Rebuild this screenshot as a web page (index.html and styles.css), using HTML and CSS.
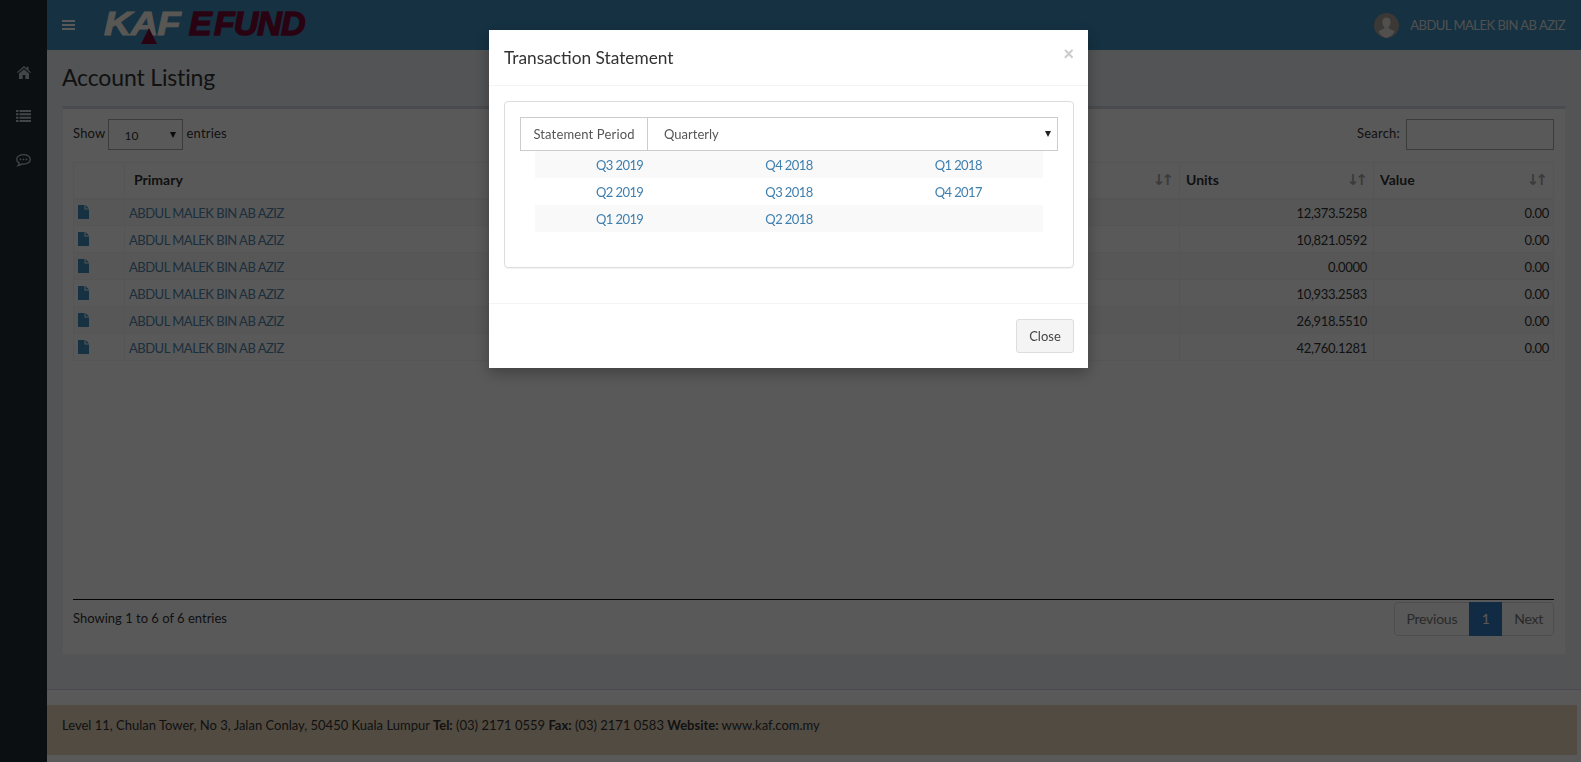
FILE: index.html
```html
<!DOCTYPE html>
<html lang="en">
<head>
    <meta charset="utf-8">
    <title>Account Listing</title>
    <link rel="stylesheet" href="styles.css">
</head>
<body>
<div class="app">
    <aside class="sidebar">
        <a class="side-link">
            <svg width="14" height="13" viewBox="0 0 14 13"><path d="M7 0 0 6.200l.8.900L7 1.800l6.200 5.300.8-.900L11.500 4V.8H9.700v1.700zM2 7.600V13h3.700V9h2.600v4H12V7.600L7 3.300z"/></svg>
        </a>
        <a class="side-link">
            <svg width="15" height="12" viewBox="0 0 15 12"><path d="M0 0h2.500v2H0zM3.500 0H15v2H3.500zM0 3.300h2.500v2H0zM3.500 3.300H15v2H3.500zM0 6.700h2.500v2H0zM3.500 6.700H15v2H3.500zM0 10h2.500v2H0zM3.500 10H15v2H3.500z"/></svg>
        </a>
        <a class="side-link">
            <svg width="15" height="13" viewBox="0 0 15 13"><path class="outline" d="M7.500.7C3.700.7.700 2.800.700 5.400c0 1.500 1 2.800 2.600 3.700-.2.900-.7 1.800-1.300 2.500 1.300-.2 2.700-.9 3.600-1.700.6.100 1.300.2 1.900.2 3.800 0 6.800-2.100 6.800-4.700S11.300.7 7.500.7z"/><circle cx="4.500" cy="5.400" r=".9"/><circle cx="7.500" cy="5.400" r=".9"/><circle cx="10.500" cy="5.400" r=".9"/></svg>
        </a>
    </aside>
    <div class="wrapper">
        <header class="topbar">
            <a class="toggle"><span></span><span></span><span></span></a>
            <div class="logo">
                <span class="logo-kaf">KAF</span>
                <span class="logo-fund">E FUND</span>
                <svg class="logo-mark" width="16" height="16" viewBox="0 0 16 16"><path d="M8 0 16 16H0z"/></svg>
            </div>
            <div class="user">
                <svg class="avatar" width="25" height="25" viewBox="0 0 25 25"><circle cx="12.500" cy="12.500" r="12.500" fill="#a8a29c"/><path fill="#e8e4e0" d="M12.500 4.500c-2.800 0-4.300 2.200-4.100 5 .1 1.700.8 3.300 1.900 4.300v1.700c-1.800 1-4.600 1.500-5.800 3.300A12.500 12.500 0 0 0 12.500 25a12.500 12.500 0 0 0 8-6.200c-1.200-1.800-4-2.300-5.800-3.300v-1.700c1.100-1 1.800-2.600 1.900-4.300.2-2.800-1.300-5-4.100-5z"/></svg>
                <span>ABDUL MALEK BIN AB AZIZ</span>
            </div>
        </header>
        <main class="content">
            <h1 class="page-title">Account Listing</h1>
            <section class="box">
                <div class="dt-top">
                    <label class="dt-length">Show
                        <span class="select-wrap select-small"><select><option>10</option></select></span>
                        entries</label>
                    <label class="dt-search">Search: <input type="text"></label>
                </div>
                <div class="dt-scroll">
                    <table class="dt-table">
                        <colgroup>
                            <col class="col-icon"><col class="col-primary"><col class="col-hidden"><col class="col-units"><col class="col-value">
                        </colgroup>
                        <thead>
                            <tr>
                                <th></th>
                                <th class="first">Primary</th>
                                <th class="sort"></th>
                                <th class="sort">Units</th>
                                <th class="sort">Value</th>
                            </tr>
                        </thead>
                        <tbody id="rows"></tbody>
                    </table>
                </div>
                <div class="dt-bottom">
                    <div class="dt-info">Showing 1 to 6 of 6 entries</div>
                    <div class="pager">
                        <a>Previous</a><a class="current">1</a><a class="next">Next</a>
                    </div>
                </div>
            </section>
        </main>
        <footer class="footer">
            <div class="footer-note">Level 11, Chulan Tower, No 3, Jalan Conlay, 50450 Kuala Lumpur <b>Tel:</b> (03) 2171 0559 <b>Fax:</b> (03) 2171 0583 <b>Website:</b> www.kaf.com.my</div>
        </footer>
    </div>
</div>

<div class="backdrop"></div>
<div class="modal">
    <div class="modal-box">
        <div class="modal-head">
            <h4>Transaction Statement</h4>
            <a class="modal-x">&times;</a>
        </div>
        <div class="modal-body">
            <div class="panel">
                <div class="input-group">
                    <span class="addon">Statement Period</span>
                    <span class="select-wrap select-period"><select><option>Quarterly</option></select></span>
                </div>
                <table class="period-table">
                    <tr><td><a>Q3 2019</a></td><td><a>Q4 2018</a></td><td><a>Q1 2018</a></td></tr>
                    <tr><td><a>Q2 2019</a></td><td><a>Q3 2018</a></td><td><a>Q4 2017</a></td></tr>
                    <tr><td><a>Q1 2019</a></td><td><a>Q2 2018</a></td><td></td></tr>
                </table>
            </div>
        </div>
        <div class="modal-foot">
            <a class="btn">Close</a>
        </div>
    </div>
</div>
<script>
    var units = ['12,373.5258', '10,821.0592', '0.0000', '10,933.2583', '26,918.5510', '42,760.1281'];
    var html = '';
    for (var i = 0; i < units.length; i++) {
        html += '<tr>' +
            '<td class="file"><svg width="11" height="14" viewBox="0 0 11 14"><path d="M0 0h6.500v4.500H11V14H0zM7.500 0 11 3.500H7.500z"/></svg></td>' +
            '<td><a>ABDUL MALEK BIN AB AZIZ</a></td><td></td>' +
            '<td class="num units">' + units[i] + '</td><td class="num">0.00</td></tr>';
    }
    document.getElementById('rows').innerHTML = html;
</script>
</body>
</html>
```

FILE: styles.css
```css
* {
    margin: 0;
    padding: 0;
    box-sizing: border-box;
}
html,body {
    height: 100%;
    overflow: hidden;
}
body {
    font-family: "Lato", "Open Sans", sans-serif;
    font-size: 13px;
    color: #333;
    background-color: #ecf0f5;
}
a {
    color: #4f86ad;
    text-decoration: none;
}
.app {
    display: flex;
    height: 100%;
}

/* sidebar */
.sidebar {
    width: 47px;
    flex: none;
    background-color: #222d32;
    padding-top: 50px;
}
.side-link {
    display: flex;
    height: 44px;
    align-items: center;
    justify-content: center;
}
.side-link svg {
    fill: #b8c7ce;
}
.side-link .outline {
    fill: none;
    stroke: #b8c7ce;
    stroke-width: 1.300;
}

/* header */
.wrapper {
    flex: 1;
    display: flex;
    flex-direction: column;
    min-width: 0;
}
.topbar {
    height: 50px;
    flex: none;
    display: flex;
    align-items: center;
    background-color: #3c8dbc;
    padding: 0 15px;
}
.toggle {
    display: flex;
    flex-direction: column;
    gap: 2px;
    width: 13px;
    margin-right: 29px;
}
.toggle span {
    height: 2px;
    background-color: #fff;
}
.logo {
    position: relative;
    display: flex;
    align-items: center;
    gap: 18px;
    height: 50px;
    padding-bottom: 3px;
    font-family: "Liberation Sans", sans-serif;
    font-size: 34px;
    font-weight: bold;
    font-style: italic;
    letter-spacing: -1px;
    white-space: nowrap;
}
.logo-kaf {
    display: block;
    color: #fff8ee;
    -webkit-text-stroke: 1px #fff8ee;
    transform: scaleX(1.130);
    transform-origin: left center;
}
.logo-fund {
    color: #7a0a34;
    word-spacing: -5px;
    -webkit-text-stroke: 1.500px #7a0a34;
}
.logo-mark {
    position: absolute;
    left: 37px;
    top: 28px;
    fill: #7a0a34;
}
.user {
    margin-left: auto;
    display: flex;
    align-items: center;
    gap: 11px;
    color: #e4e4e4;
    letter-spacing: -.5px;
    padding-right: 1px;
}

/* content */
.content {
    flex: 1;
    min-height: 0;
    display: flex;
    flex-direction: column;
    padding: 15px 15px 34px;
}
.page-title {
    font-size: 23px;
    font-weight: 400;
    line-height: 25px;
    letter-spacing: -.15px;
    margin-bottom: 16px;
}
.box {
    flex: 1;
    min-height: 0;
    display: flex;
    flex-direction: column;
    background-color: #fff;
    border: 1px solid #f4f4f4;
    border-top: 3px solid #d2d6de;
    padding: 10px 11px 18px 10px;
}
.dt-top {
    display: flex;
    justify-content: space-between;
    align-items: center;
    height: 31px;
    margin-bottom: 12px;
}
.dt-length,
.dt-search {
    display: flex;
    align-items: center;
    gap: 3px;
    padding-bottom: 4px;
    letter-spacing: .2px;
}
.dt-search {
    gap: 6px;
}
.dt-search input {
    width: 148px;
    height: 31px;
    margin-bottom: -4px;
    border: 1px solid #aaa;
    background-color: transparent;
}
.select-wrap {
    position: relative;
    display: block;
}
.select-wrap select {
    appearance: none;
    -webkit-appearance: none;
    width: 100%;
    height: 100%;
    background-color: transparent;
    border: 1px solid #aaa;
    color: #333;
    font-family: inherit;
    font-size: inherit;
}
.select-wrap::after {
    content: "";
    position: absolute;
    right: 7px;
    top: 50%;
    margin-top: -3px;
    border-left: 3px solid transparent;
    border-right: 3px solid transparent;
    border-top: 6px solid #222;
}
.select-small {
    width: 75px;
    height: 31px;
    margin-bottom: -4px;
    font-size: 12px;
}
.select-small select {
    padding: 2px 0 0 15px;
}
.dt-scroll {
    flex: 1;
    min-height: 0;
    border-bottom: 1px solid #111;
}
.dt-table {
    width: 100%;
    table-layout: fixed;
    border-collapse: collapse;
}
.col-icon { width: 51px; }
.col-hidden { width: 380px; }
.col-units { width: 194px; }
.col-value { width: 180px; }
.dt-table th {
    height: 36px;
    text-align: left;
    padding: 0 6px 2px;
    position: relative;
    border: 1px solid #f4f4f4;
    border-bottom-width: 2px;
    font-size: 14px;
}
.dt-table th.first {
    padding-left: 9px;
}
.dt-table th.sort::after {
    content: "\2193\2191";
    position: absolute;
    right: 9px;
    top: 8px;
    font-family: "DejaVu Sans", sans-serif;
    font-size: 15px;
    font-weight: bold;
    letter-spacing: -4px;
    color: #aaa;
}
.dt-table td {
    height: 27px;
    padding: 2px 4px 0;
    border: 1px solid #f4f4f4;
    white-space: nowrap;
}
.dt-table td a {
    letter-spacing: -.5px;
}
.dt-table tbody tr:nth-child(odd) {
    background-color: #f9f9f9;
}
.dt-table .num {
    text-align: right;
    letter-spacing: -.3px;
}
.dt-table .units {
    padding-right: 6px;
}
.dt-table .file {
    padding-left: 4px;
    line-height: 0;
}
.file svg {
    fill: #3c8dbc;
    margin-top: -3px;
}
.dt-bottom {
    display: flex;
    justify-content: space-between;
    align-items: center;
    padding-top: 2px;
}
.dt-info {
    padding-bottom: 3px;
}
.pager {
    display: flex;
    height: 34px;
    border: 1px solid #ddd;
    border-radius: 4px;
    font-size: 14px;
    letter-spacing: -.25px;
}
.pager a {
    padding: 0 12px;
    line-height: 32px;
    color: #777;
}
.pager a.next {
    padding-right: 10px;
}
.pager a.current {
    width: 33px;
    padding: 0;
    margin: -1px 0;
    text-align: center;
    color: #fff;
    background-color: #2f7bc0;
    line-height: 34px;
}

/* footer */
.footer {
    flex: none;
    height: 73px;
    background-color: #fff;
    border-top: 1px solid #d2d6de;
    padding-top: 15px;
}
.footer-note {
    height: 50px;
    line-height: 40px;
    padding-left: 15px;
    margin-right: 4px;
    background-color: #e8d6bc;
}

/* modal */
.backdrop {
    position: fixed;
    top: 0;
    left: 0;
    right: 0;
    bottom: 0;
    background-color: #000;
    opacity: .65;
}
.modal {
    position: fixed;
    top: 30px;
    left: 0;
    right: 4px;
    display: flex;
    justify-content: center;
}
.modal-box {
    width: 599px;
    background-color: #fff;
    box-shadow: 0 5px 15px rgba(0, 0, 0, .3);
}
.modal-box a {
    color: #3f7fae;
}
.modal-head {
    position: relative;
    padding: 15px;
    border-bottom: 1px solid #f4f4f4;
}
.modal-head h4 {
    font-size: 17.300px;
    font-weight: 400;
    line-height: 25px;
}
.modal-box .modal-x {
    position: absolute;
    right: 14px;
    top: 12px;
    font-family: "Liberation Sans", sans-serif;
    font-size: 18px;
    font-weight: bold;
    line-height: 24px;
    color: #ccc;
}
.modal-body {
    padding: 15px 14px 35px 15px;
}
.panel {
    border: 1px solid #ddd;
    border-radius: 4px;
    padding: 15px 15px 35px;
    box-shadow: 0 1px 1px rgba(0, 0, 0, .05);
}
.input-group {
    display: flex;
    height: 34px;
}
.addon {
    width: 127px;
    flex: none;
    text-align: center;
    line-height: 32px;
    letter-spacing: .15px;
    border: 1px solid #ccc;
    border-right: 0;
    color: #555;
}
.select-period {
    flex: 1;
}
.select-period select {
    padding-left: 16px;
    border-color: #ccc;
    color: #555;
}
.period-table {
    width: 508px;
    margin: 0 15px;
    table-layout: fixed;
    border-collapse: collapse;
    letter-spacing: -.6px;
}
.period-table td {
    height: 27px;
    text-align: center;
}
.period-table tr:nth-child(odd) {
    background-color: #f9f9f9;
}
.modal-foot {
    display: flex;
    justify-content: flex-end;
    padding: 15px 14px 15px 15px;
    border-top: 1px solid #f4f4f4;
}
.modal-box .btn {
    height: 34px;
    width: 58px;
    line-height: 32px;
    text-align: center;
    color: #444;
    background-color: #f4f4f4;
    border: 1px solid #ddd;
    border-radius: 3px;
}
```
